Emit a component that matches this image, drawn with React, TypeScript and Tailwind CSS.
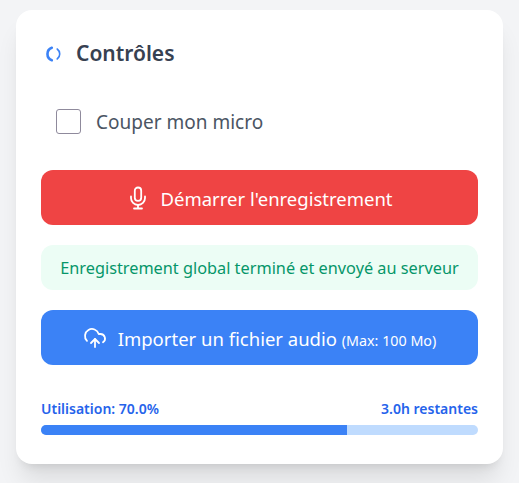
import { CloudUpload } from 'lucide-react'

export default function App() {
  return (
    <div
      className="h-[483px] overflow-hidden bg-[#f3f4f6] px-4 pt-2.5"
      style={{ fontFamily: '"Noto Sans", sans-serif' }}
    >
      <div className="h-[454px] rounded-2xl bg-white px-[25px] pt-6 shadow-xl">
        {/* Titre */}
        <div className="flex h-10 items-center">
          <svg width="16" height="16" viewBox="0 0 16 16" fill="none" className="ml-[5px]">
            <path d="M5.8 1.8 A6.6 6.6 0 0 0 5.8 14.2" stroke="#3b82f6" strokeWidth="2.6" strokeLinecap="round" />
            <path d="M11.2 3 A6.2 6.2 0 0 1 11.2 13" stroke="#3b82f6" strokeWidth="1.6" strokeLinecap="round" />
          </svg>
          <h2 className="ml-[14px] text-[21px] font-semibold text-[#374151]">Contrôles</h2>
        </div>

        {/* Micro */}
        <label className="mt-[34px] flex h-[26px] items-center pl-[15px]">
          <span className="h-[25px] w-[25px] rounded-[3px] border border-[#8f8a9c] bg-white" />
          <span className="ml-[15px] pt-0.5 text-[19px] text-[#4b5563]">Couper mon micro</span>
        </label>

        <button className="mt-9 flex h-[55px] w-full items-center justify-center gap-2.5 rounded-xl bg-[#ef4444] text-[18.5px] text-white">
          <svg width="24" height="24" viewBox="0 0 24 24" fill="none" stroke="currentColor" strokeWidth="1.8" strokeLinecap="round" strokeLinejoin="round">
            <path d="M12 1.5a3.2 3.2 0 0 0-3.2 3.2v7a3.2 3.2 0 0 0 6.4 0v-7A3.2 3.2 0 0 0 12 1.5z" />
            <path d="M19 10.5v1.5a7 7 0 0 1-14 0v-1.5" />
            <path d="M12 19v3.5M8 22.5h8" />
          </svg>
          <span className="pt-0.5">Démarrer l'enregistrement</span>
        </button>

        <div className="mt-5 flex h-[45px] items-center justify-center rounded-xl bg-[#ecfdf5] pt-0.5 text-[16.3px] text-[#059669]">
          Enregistrement global terminé et envoyé au serveur
        </div>

        <button className="mt-5 flex h-[55px] w-full items-center justify-center gap-[11px] rounded-xl bg-[#3b82f6] text-[18.5px] text-white">
          <CloudUpload size={24} strokeWidth={1.8} />
          <span className="pt-0.5">
            Importer un fichier audio <span className="text-[14.3px]">(Max: 100 Mo)</span>
          </span>
        </button>

        {/* Utilisation */}
        <div className="mt-[34px] flex justify-between text-sm font-semibold text-[#2563eb]">
          <span>Utilisation: 70.0%</span>
          <span>3.0h restantes</span>
        </div>
        <div className="mt-1.5 h-2.5 overflow-hidden rounded-full bg-[#bfdbfe]">
          <div className="h-full bg-[#3b82f6]" style={{ width: '70%' }} />
        </div>
      </div>
    </div>
  )
}
